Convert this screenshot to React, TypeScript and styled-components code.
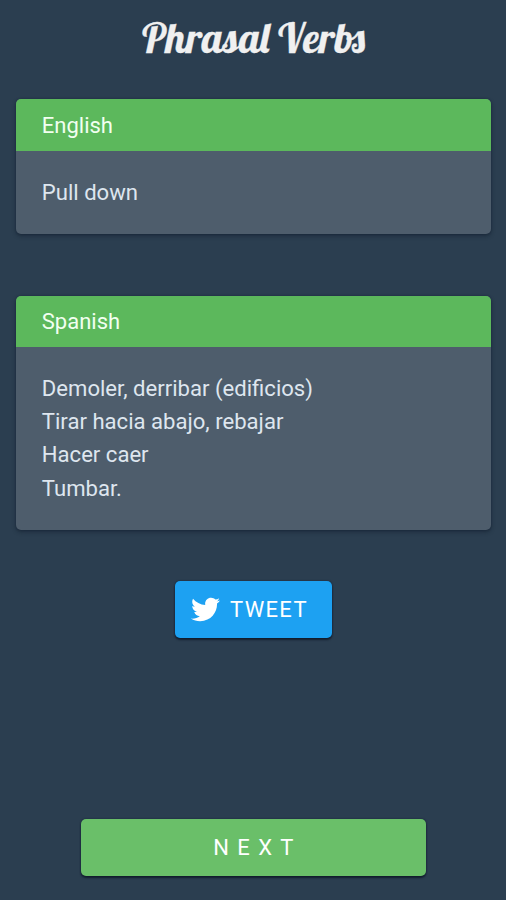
import React from 'react';
import styled, { createGlobalStyle } from 'styled-components';
import { FaTwitter } from 'react-icons/fa';

const GlobalStyle = createGlobalStyle`
  *, *::before, *::after { box-sizing: border-box; }
  body { margin: 0; background: #2b3e50; }
`;

const Page = styled.main`
  display: flex;
  flex-direction: column;
  align-items: center;
  height: 900px;
  padding: 0 15px 24px 16px;
  background: #2b3e50;
  font-family: Roboto, sans-serif;
  font-size: 22px;
  color: #dee6ef;
`;

const Title = styled.h1`
  margin: 0;
  height: 99px;
  padding-top: 13px;
  font: 400 41.1px/50px Lobster, 'Liberation Serif', serif;
  -webkit-text-stroke: 0.3px #f0f0f0;
  white-space: nowrap;
  color: #f0f0f0;
`;

const Card = styled.section`
  width: 100%;
  border-radius: 5px;
  overflow: hidden;
  background: #4e5d6c;
  box-shadow: 0 2px 4px rgba(12, 22, 38, 0.45), 0 0 2px rgba(12, 22, 48, 0.4);

  & + & { margin-top: 61.5px; }
`;

const CardHeader = styled.h2<{ $height: number }>`
  display: flex;
  align-items: center;
  height: ${({ $height }) => $height}px;
  margin: 0;
  padding: 0 25.8px;
  background: #5cb85c;
  color: #f1fff0;
  font-size: 22px;
  font-weight: 400;
`;

const CardBody = styled.div`
  padding: 25px 25.8px;
  font-size: 22.1px;
  line-height: 33.12px;
`;

const Line = styled.p`
  margin: 0;
`;

const Button = styled.button`
  display: flex;
  align-items: center;
  height: 57px;
  padding: 0;
  border: 0;
  border-radius: 5px;
  color: #fff;
  font: 400 22px Roboto, sans-serif;
  box-shadow: 0 2px 2px rgba(8, 16, 30, 0.65), 0 0 2px rgba(8, 16, 40, 0.6);
`;

const TweetButton = styled(Button)`
  width: 157px;
  margin-top: 51.3px;
  padding-left: 15.5px;
  gap: 10.5px;
  background: #1da1f2;
  letter-spacing: 1.35px;
`;

const NextButton = styled(Button)`
  justify-content: center;
  width: 345px;
  margin-top: auto;
  background: #6abf69;
  letter-spacing: 8.4px;
  padding-left: 8px;
`;

function Entry({ title, lines, headerHeight }: { title: string; lines: string[]; headerHeight: number }) {
  return (
    <Card>
      <CardHeader $height={headerHeight}>{title}</CardHeader>
      <CardBody>
        {lines.map((line) => (
          <Line key={line}>{line}</Line>
        ))}
      </CardBody>
    </Card>
  );
}

export default function App() {
  return (
    <>
      <GlobalStyle />
      <Page>
        <Title>Phrasal Verbs</Title>
        <Entry title="English" lines={['Pull down']} headerHeight={52} />
        <Entry
          title="Spanish"
          headerHeight={51.5}
          lines={['Demoler, derribar (edificios)', 'Tirar hacia abajo, rebajar', 'Hacer caer', 'Tumbar.']}
        />
        <TweetButton type="button">
          <FaTwitter size={29} />
          TWEET
        </TweetButton>
        <NextButton type="button">NEXT</NextButton>
      </Page>
    </>
  );
}
